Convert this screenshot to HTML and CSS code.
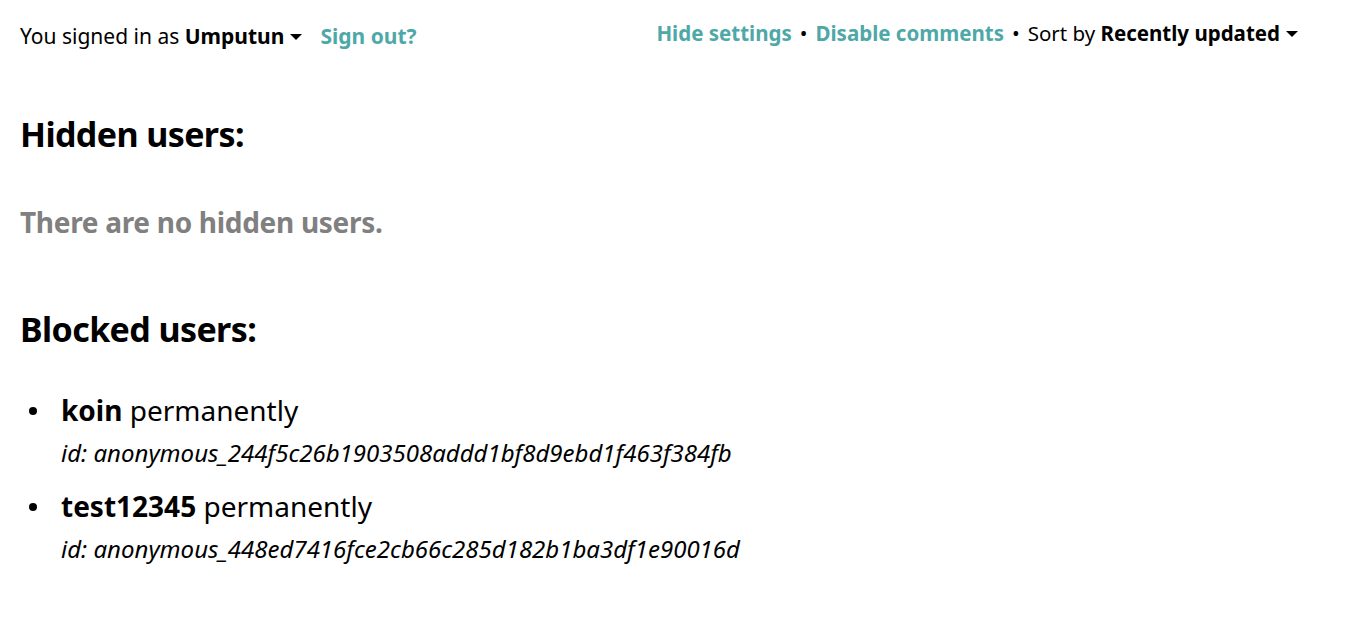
FILE: index.html
```html
<!DOCTYPE html>
<html>
<head>
<meta charset="utf-8">
<link rel="stylesheet" href="styles.css">
</head>
<body>
<div class="page">
  <header class="topbar">
    <div class="signed">
      <span>You signed in as <b class="user">Umputun</b><span class="caret"></span></span>
      <a class="link signout" href="#">Sign out?</a>
    </div>
    <div class="settings">
      <a class="link" href="#">Hide settings</a>
      <span class="dot">•</span>
      <a class="link" href="#">Disable comments</a>
      <span class="dot">•</span>
      <span>Sort by <b>Recently updated</b><span class="caret"></span></span>
    </div>
  </header>

  <h2 class="heading">Hidden users:</h2>
  <p class="empty">There are no hidden users.</p>

  <h2 class="heading blocked">Blocked users:</h2>
  <ul class="list">
    <li class="item">
      <div class="name"><b>koin</b> permanently</div>
      <div class="uid">id: anonymous_244f5c26b1903508addd1bf8d9ebd1f463f384fb</div>
    </li>
    <li class="item">
      <div class="name"><b>test12345</b> permanently</div>
      <div class="uid">id: anonymous_448ed7416fce2cb66c285d182b1ba3df1e90016d</div>
    </li>
  </ul>
</div>
</body>
</html>
```
FILE: styles.css
```css
html, body {
  margin: 0;
  padding: 0;
  background: #fff;
}
body {
  font-family: "Noto Sans", "Open Sans", sans-serif;
  color: #000;
}
.page {
  padding: 0 56px 0 20px;
}
.topbar {
  display: flex;
  justify-content: space-between;
  align-items: flex-start;
  padding-top: 18px;
  line-height: 30px;
}
.signed {
  display: flex;
  gap: 18px;
  align-items: baseline;
  padding-top: 3px;
  font-size: 21px;
}
.settings {
  display: flex;
  gap: 8px;
  align-items: baseline;
  font-size: 20.5px;
}
.link {
  color: #4fa8a8;
  font-weight: 700;
  text-decoration: none;
}
.caret {
  display: inline-block;
  width: 0;
  height: 0;
  border-left: 6px solid transparent;
  border-right: 6px solid transparent;
  border-top: 6px solid #000;
  margin-left: 6px;
  vertical-align: 4px;
}
.heading {
  font-size: 34px;
  letter-spacing: -0.6px;
  font-weight: 700;
  margin: 0;
  margin-top: 60px;
  line-height: 46px;
}
.empty {
  font-size: 28px;
  letter-spacing: -0.3px;
  font-weight: 700;
  color: #808080;
  margin: 47px 0 0;
  line-height: 36px;
}
.blocked {
  margin-top: 66px;
}
.list {
  margin: 40px 0 0;
  padding: 0;
  list-style: none;
}
.item {
  display: grid;
  grid-template-columns: 41px auto;
  font-size: 28px;
  line-height: 36px;
  margin-bottom: 20px;
}
.item::before {
  content: "";
  grid-row: 1;
  grid-column: 1;
  align-self: center;
  width: 8px;
  height: 8px;
  margin: 0 0 -2px 9px;
  border-radius: 50%;
  background: #000;
}
.name {
  grid-column: 2;
  grid-row: 1;
}
.uid {
  grid-column: 2;
  grid-row: 2;
  font-size: 24px;
  font-style: italic;
  line-height: 30px;
  margin-top: 10px;
}
```
